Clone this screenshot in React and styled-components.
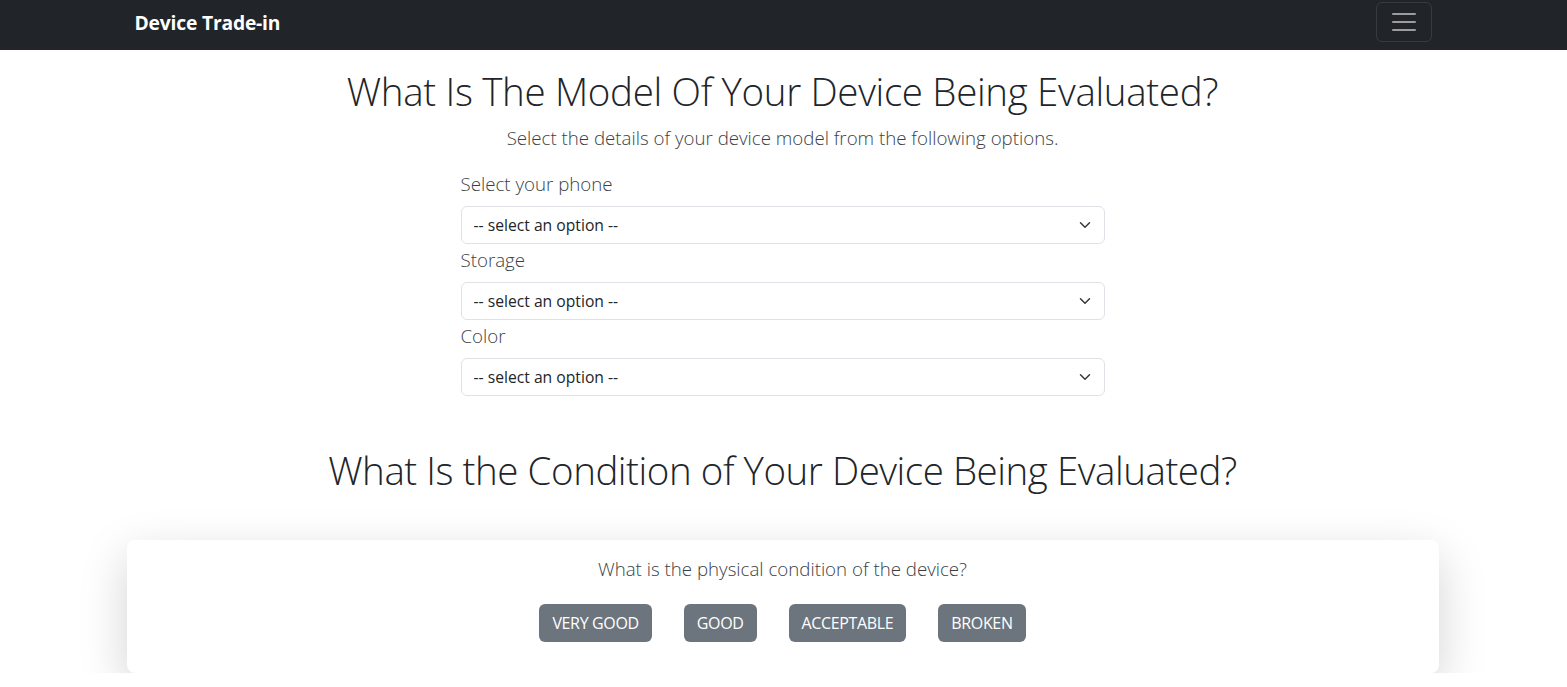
import React from 'react'
import styled, { createGlobalStyle } from 'styled-components'

const Global = createGlobalStyle`
  * { box-sizing: border-box; }
  body {
    margin: 0;
    font-family: "Open Sans", "Noto Sans", sans-serif;
    color: #212529;
    background: #fff;
  }
`

const Navbar = styled.nav`
  height: 50px;
  background: #212529;
`

const NavInner = styled.div`
  width: 1320px;
  margin: 0 auto;
  padding: 1px 12px 0 11px;
  height: 43px;
  display: flex;
  align-items: center;
  justify-content: space-between;
`

const Brand = styled.a`
  color: #fff;
  font-size: 19.3px;
  font-weight: 700;
  text-decoration: none;
  letter-spacing: -0.2px;
`

const Toggler = styled.button`
  width: 56px;
  height: 40px;
  border: 1px solid rgba(255, 255, 255, 0.1);
  border-radius: 6px;
  background: transparent;
  display: flex;
  align-items: center;
  justify-content: center;
  padding: 0;
`

const Main = styled.main`
  width: 1320px;
  margin: 0 auto;
  padding: 17px 13px 0 11px;
  display: flex;
  flex-direction: column;
  align-items: center;
`

const Heading = styled.h1`
  margin: 0;
  font-size: 38.5px;
  font-weight: 300;
  line-height: 48px;
  text-align: center;
  letter-spacing: ${(p) => (p.$tight ? '-0.45px' : '-0.33px')};
`

const Lead = styled.p`
  margin: 8px 0 15px;
  font-size: 18.7px;
  font-weight: 300;
  line-height: 30px;
  text-align: center;
  color: #3a3f47;
`

const Form = styled.form`
  width: 644px;
  display: flex;
  flex-direction: column;
  margin-bottom: 50px;
`

const Label = styled.label`
  font-size: 18.7px;
  font-weight: 300;
  line-height: 30px;
  margin-bottom: 8px;
  padding-top: 1px;
  height: 30px;
  color: #3a3f47;
`

const SelectWrap = styled.div`
  position: relative;
  height: 38px;
`

const Select = styled.select`
  width: 100%;
  height: 38px;
  appearance: none;
  border: 1px solid #dee2e6;
  border-radius: 6px;
  background: #fff;
  padding: 0 36px 0 12px;
  font-family: "Open Sans", "Noto Sans", sans-serif;
  font-size: 15.7px;
  color: #212529;
`

const Chevron = styled.svg`
  position: absolute;
  right: 13px;
  top: 13px;
  pointer-events: none;
`

const Card = styled.section`
  width: 1312px;
  margin-top: 46px;
  background: #fff;
  border-radius: 8px;
  box-shadow: 0 16px 48px rgba(0, 0, 0, 0.175);
  padding: 14px 0 31px;
  display: flex;
  flex-direction: column;
  align-items: center;
`

const Question = styled.p`
  margin: 0 0 20px;
  font-size: 18.7px;
  font-weight: 300;
  line-height: 30px;
  color: #3a3f47;
`

const Buttons = styled.div`
  display: flex;
  gap: 32px;
`

const Choice = styled.button`
  height: 38px;
  padding: 0 13px;
  border: none;
  border-radius: 6px;
  background: #6c757d;
  color: #fff;
  font-family: "Open Sans", "Noto Sans", sans-serif;
  font-size: 16px;
  text-transform: uppercase;
  letter-spacing: -0.35px;
`

const fields = ['Select your phone', 'Storage', 'Color']
const conditions = ['Very Good', 'Good', 'Acceptable', 'Broken']

const App = () => {
  return (
    <>
      <Global />
      <Navbar>
        <NavInner>
          <Brand href="#">Device Trade-in</Brand>
          <Toggler>
            <svg width="30" height="30" viewBox="0 0 30 30">
              <path
                d="M4 7h22M4 15h22M4 23h22"
                stroke="rgba(255,255,255,0.55)"
                strokeWidth="2"
                strokeLinecap="round"
              />
            </svg>
          </Toggler>
        </NavInner>
      </Navbar>
      <Main>
        <Heading>What Is The Model Of Your Device Being Evaluated?</Heading>
        <Lead>Select the details of your device model from the following options.</Lead>
        <Form>
          {fields.map((f) => (
            <React.Fragment key={f}>
              <Label>{f}</Label>
              <SelectWrap>
                <Select defaultValue="">
                  <option value="">-- select an option --</option>
                </Select>
                <Chevron width="14" height="12" viewBox="0 0 16 16">
                  <path d="m2 5 6 6 6-6" fill="none" stroke="#343a40" strokeWidth="2" strokeLinecap="round" strokeLinejoin="round" />
                </Chevron>
              </SelectWrap>
            </React.Fragment>
          ))}
        </Form>
        <Heading $tight>What Is the Condition of Your Device Being Evaluated?</Heading>
        <Card>
          <Question>What is the physical condition of the device?</Question>
          <Buttons>
            {conditions.map((c) => (
              <Choice key={c} type="button">{c}</Choice>
            ))}
          </Buttons>
        </Card>
      </Main>
    </>
  )
}

export default App
